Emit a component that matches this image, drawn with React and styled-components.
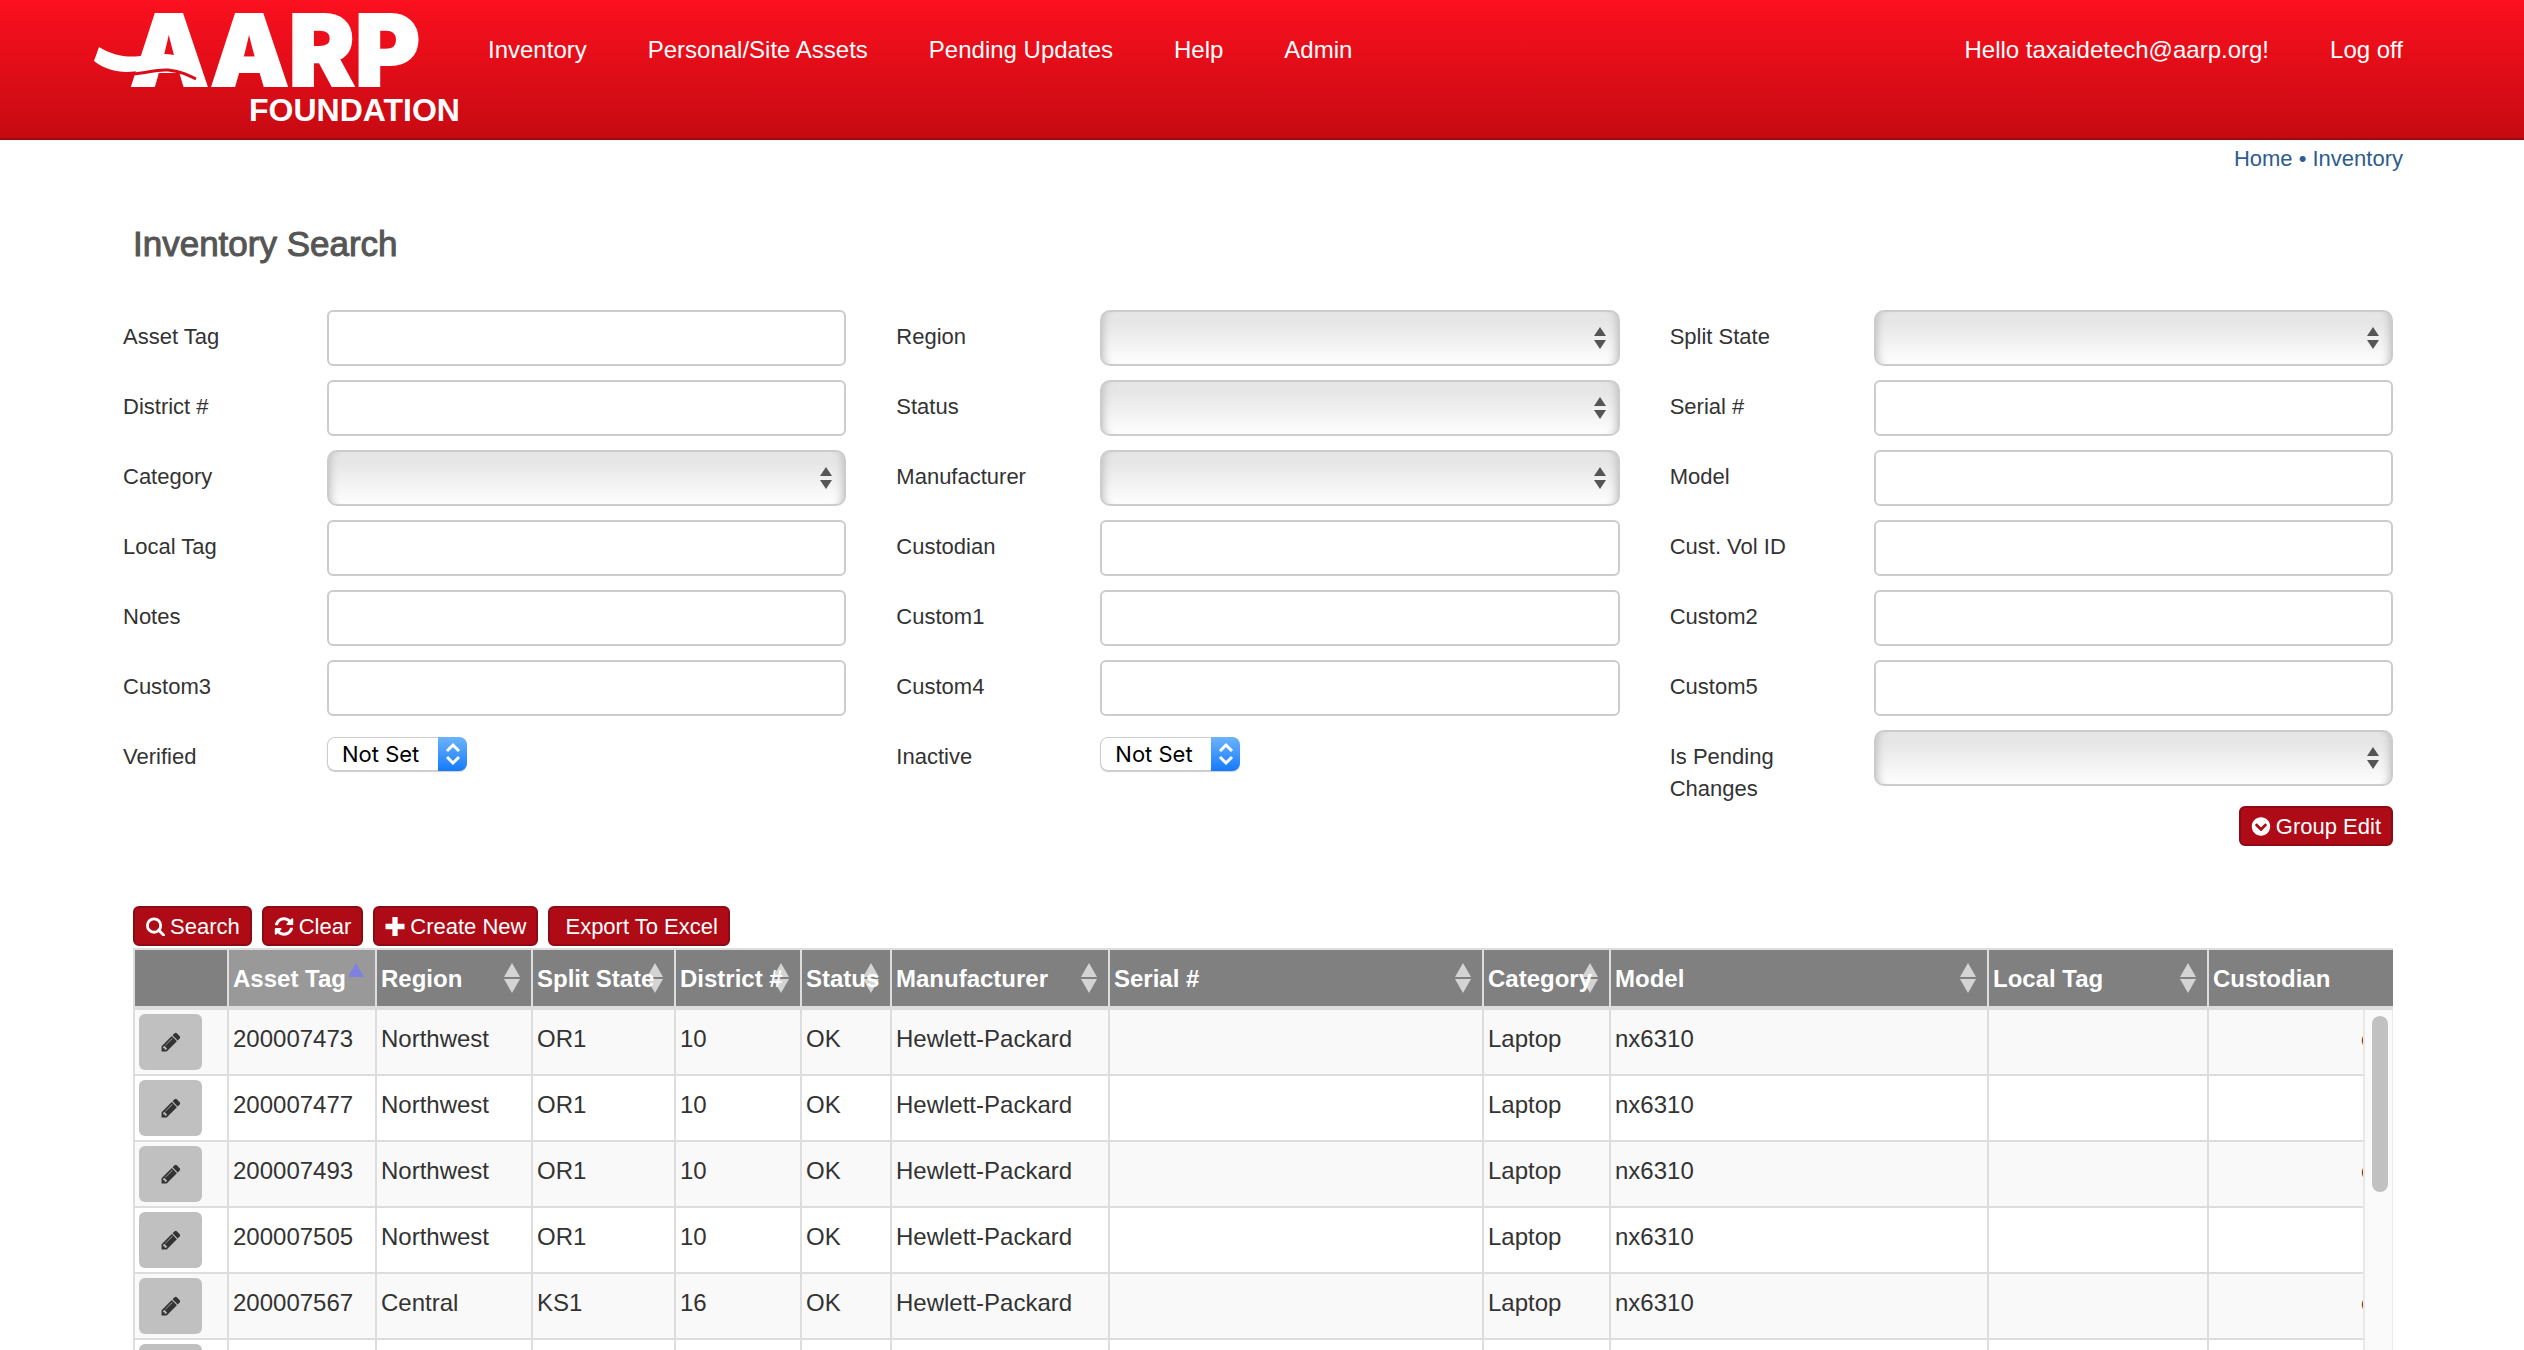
import React from 'react';
import styled, { createGlobalStyle } from 'styled-components';
import { FaSyncAlt, FaChevronCircleDown } from 'react-icons/fa';

const fields = [
    { label: 'Asset Tag', type: 'text' },
    { label: 'Region', type: 'select' },
    { label: 'Split State', type: 'select' },
    { label: 'District #', type: 'text' },
    { label: 'Status', type: 'select' },
    { label: 'Serial #', type: 'text' },
    { label: 'Category', type: 'select' },
    { label: 'Manufacturer', type: 'select' },
    { label: 'Model', type: 'text' },
    { label: 'Local Tag', type: 'text' },
    { label: 'Custodian', type: 'text' },
    { label: 'Cust. Vol ID', type: 'text' },
    { label: 'Notes', type: 'text' },
    { label: 'Custom1', type: 'text' },
    { label: 'Custom2', type: 'text' },
    { label: 'Custom3', type: 'text' },
    { label: 'Custom4', type: 'text' },
    { label: 'Custom5', type: 'text' },
    { label: 'Verified', type: 'tristate' },
    { label: 'Inactive', type: 'tristate' },
    { label: 'Is Pending Changes', type: 'select' }
];

const columns = [
    { key: 'edit', title: '', width: 94 },
    { key: 'tag', title: 'Asset Tag', width: 148, sort: 'asc' },
    { key: 'region', title: 'Region', width: 156, sort: 'both' },
    { key: 'split', title: 'Split State', width: 143, sort: 'both' },
    { key: 'district', title: 'District #', width: 126, sort: 'both' },
    { key: 'status', title: 'Status', width: 90, sort: 'both' },
    { key: 'maker', title: 'Manufacturer', width: 218, sort: 'both' },
    { key: 'serial', title: 'Serial #', width: 374, sort: 'both' },
    { key: 'category', title: 'Category', width: 127, sort: 'both' },
    { key: 'model', title: 'Model', width: 378, sort: 'both' },
    { key: 'local', title: 'Local Tag', width: 220, sort: 'both' },
    { key: 'custodian', title: 'Custodian', width: 186 }
];

const laptop = { status: 'OK', maker: 'Hewlett-Packard', category: 'Laptop', model: 'nx6310' };

const rows = [
    { ...laptop, tag: '200007473', region: 'Northwest', split: 'OR1', district: '10', custodian: 'c' },
    { ...laptop, tag: '200007477', region: 'Northwest', split: 'OR1', district: '10' },
    { ...laptop, tag: '200007493', region: 'Northwest', split: 'OR1', district: '10', custodian: 'c' },
    { ...laptop, tag: '200007505', region: 'Northwest', split: 'OR1', district: '10' },
    { ...laptop, tag: '200007567', region: 'Central', split: 'KS1', district: '16', custodian: 'c' },
    {}
];

const Logo = () => (
    <LogoSvg viewBox="0 0 372 124" role="img" aria-label="AARP Foundation">
        <LogoName x="36" y="86">AARP</LogoName>
        <path d="M5 47 C18 55 32 58 46 56 C62 53 82 53 98 60 L102 75 C88 66 64 64 48 70 C32 74 14 72 0 61 Z" fill="#fff" />
        <path d="M34 74 C52 74 60 69 74 70 C86 71 94 75 102 79" fill="none" stroke="#d90c18" strokeWidth="3" />
        <LogoSub x="155" y="121">FOUNDATION</LogoSub>
    </LogoSvg>
);

const SearchIcon = () => (
    <svg viewBox="0 0 20 20" aria-hidden="true" fill="none" stroke="currentColor" strokeLinecap="round">
        <circle cx="9" cy="9" r="7" strokeWidth="3" />
        <path d="M14 14 L19 19" strokeWidth="3" />
    </svg>
);

const PlusIcon = () => (
    <svg viewBox="0 0 18 18" aria-hidden="true" fill="none" stroke="currentColor" strokeWidth="5">
        <path d="M9 0 V18 M0 9 H18" />
    </svg>
);

const PencilIcon = () => (
    <svg viewBox="0 0 1792 1792" aria-hidden="true" fill="currentColor">
        <path d="M491 1536l91-91-235-235-91 91v107h128v128h107zm523-928q0-22-22-22-10 0-17 7l-542 542q-7 7-7 17 0 22 22 22 10 0 17-7l542-542q7-7 7-17zm-54-192l416 416-832 832h-416v-416zm683 96q0 53-37 90l-166 166-416-416 166-165q36-38 90-38 53 0 91 38l235 234q37 39 37 91z" />
    </svg>
);

const SortMark = ({ dir }) => (
    <SortSvg viewBox="0 0 16 30" aria-hidden="true">
        <path d="M8 0 L16 14 H0 Z" fill={dir === 'asc' ? '#8080e0' : '#d4d4d4'} />
        {dir === 'both' && <path d="M0 16 H16 L8 30 Z" fill="#d4d4d4" />}
    </SortSvg>
);

const Field = ({ label, type }) => {
    const id = label.toLowerCase().replace(/[^a-z0-9]+/g, '-');

    return (
        <FieldRow>
            <Label htmlFor={id}>{label}</Label>
            {type === 'text' && <TextInput id={id} type="text" />}
            {type === 'select' && (
                <SelectBox>
                    <Select id={id}>
                        <option value=""></option>
                    </Select>
                    <SelectArrows viewBox="0 0 12 22" aria-hidden="true">
                        <path d="M6 0 L12 9 H0 Z M0 13 H12 L6 22 Z" fill="#555" />
                    </SelectArrows>
                </SelectBox>
            )}
            {type === 'tristate' && (
                <NativeBox>
                    <NativeSelect id={id}>
                        <option>Not Set</option>
                    </NativeSelect>
                    <NativeArrows viewBox="0 0 29 34" aria-hidden="true">
                        <path d="M9 14 L15 8 L21 14 M9 20 L15 26 L21 20" />
                    </NativeArrows>
                </NativeBox>
            )}
        </FieldRow>
    );
};

export default class App extends React.Component {
    _renderCell(row, column) {
        if (column.key === 'edit') {
            return (
                <EditCell key={column.key}>
                    <EditButton type="button" aria-label="Edit">
                        <PencilIcon />
                    </EditButton>
                </EditCell>
            );
        }

        const CellTag = column.key === 'custodian' ? CustodianCell : Cell;
        return <CellTag key={column.key}>{row[column.key]}</CellTag>;
    }

    render() {
        return (
            <Page>
                <GlobalStyle />
                <Header>
                    <Logo />
                    <Nav>
                        <NavLink href="#">Inventory</NavLink>
                        <NavLink href="#">Personal/Site Assets</NavLink>
                        <NavLink href="#">Pending Updates</NavLink>
                        <NavLink href="#">Help</NavLink>
                        <NavLink href="#">Admin</NavLink>
                    </Nav>
                    <Nav>
                        <NavLink href="#">Hello taxaidetech@aarp.org!</NavLink>
                        <NavLink href="#">Log off</NavLink>
                    </Nav>
                </Header>
                <Breadcrumb>
                    <a href="#">Home</a> • <a href="#">Inventory</a>
                </Breadcrumb>
                <Title>Inventory Search</Title>
                <SearchForm onSubmit={(event) => event.preventDefault()}>
                    <FieldGrid>
                        {fields.map((field) => <Field key={field.label} {...field} />)}
                    </FieldGrid>
                    <FormFooter>
                        <Button type="button"><FaChevronCircleDown />Group Edit</Button>
                    </FormFooter>
                </SearchForm>
                <Results>
                    <Toolbar>
                        <Button type="button"><SearchIcon />Search</Button>
                        <Button type="button"><FaSyncAlt />Clear</Button>
                        <Button type="button"><PlusIcon />Create New</Button>
                        <Button type="button" $plain>Export To Excel</Button>
                    </Toolbar>
                    <TableWrap>
                        <Table>
                            <colgroup>
                                {columns.map((column) => <Col key={column.key} $width={column.width} />)}
                            </colgroup>
                            <thead>
                                <tr>
                                    {columns.map((column) => (
                                        <HeadCell key={column.key} scope="col" $sorted={column.sort === 'asc'}>
                                            {column.sort && <SortMark dir={column.sort} />}
                                            <HeadText>{column.title}</HeadText>
                                        </HeadCell>
                                    ))}
                                </tr>
                            </thead>
                            <tbody>
                                {rows.map((row, index) => (
                                    <Row key={index}>
                                        {columns.map((column) => this._renderCell(row, column))}
                                    </Row>
                                ))}
                            </tbody>
                        </Table>
                        <ScrollTrack>
                            <ScrollThumb />
                        </ScrollTrack>
                    </TableWrap>
                </Results>
            </Page>
        );
    }
}

const GlobalStyle = createGlobalStyle`
    * {
        box-sizing: border-box;
    }

    body {
        margin: 0;
        background: #fff;
        color: #333;
        font: 22px/32px "Liberation Sans", Arial, sans-serif;
    }
`;

const Page = styled.div`
    display: flex;
    flex-direction: column;
    height: 100vh;
    overflow: hidden;
`;

const Header = styled.header`
    display: flex;
    flex: none;
    align-items: flex-start;
    height: 140px;
    padding: 0 121px 0 94px;
    border-bottom: 2px solid #a00610;
    background: linear-gradient(#fb101e, #c60a12);
`;

const LogoSvg = styled.svg`
    flex: none;
    width: 372px;
    height: 124px;
    margin-right: 22px;
    overflow: visible;
`;

const LogoName = styled.text`
    font-family: Inter, "Liberation Sans", sans-serif;
    font-size: 99px;
    font-weight: 900;
    fill: #fff;
    stroke: #fff;
    stroke-width: 2px;
`;

const LogoSub = styled.text`
    font-size: 32px;
    font-weight: bold;
    fill: #fff;
`;

const Nav = styled.nav`
    display: flex;
    gap: 61px;
    padding-top: 34px;

    &:last-child {
        margin-left: auto;
    }
`;

const NavLink = styled.a`
    color: #fff;
    font-size: 24px;
    text-decoration: none;
    white-space: nowrap;
`;

const Breadcrumb = styled.nav`
    flex: none;
    padding: 3px 121px 0 0;
    color: #2d5c8e;
    text-align: right;

    a {
        color: inherit;
        text-decoration: none;
    }
`;

const Title = styled.h1`
    flex: none;
    margin: 50px 133px 47px;
    color: #555;
    font-size: 35px;
    font-weight: normal;
    line-height: 38px;
    -webkit-text-stroke: 1px #555;
`;

const SearchForm = styled.form`
    flex: none;
    padding: 0 131px 0 123px;
`;

const FieldGrid = styled.div`
    display: grid;
    grid-template-columns: repeat(3, 1fr);
    gap: 14px 50px;
`;

const FieldRow = styled.div`
    display: grid;
    grid-template-columns: 204px 1fr;
    align-items: start;
`;

const Label = styled.label`
    width: 140px;
    padding-top: 11px;
`;

const TextInput = styled.input`
    width: 100%;
    height: 56px;
    padding: 0 16px;
    border: 2px solid #ccc;
    border-radius: 6px;
    background: #fff;
    font: inherit;
`;

const SelectBox = styled.div`
    position: relative;
`;

const Select = styled.select`
    display: block;
    width: 100%;
    height: 56px;
    padding: 0 16px;
    border: 2px solid #ccc;
    border-radius: 10px;
    appearance: none;
    background: linear-gradient(#e6e6e6 20%, #fefefe);
    box-shadow: inset 9px 0 9px -8px #bbb, inset -9px 0 9px -8px #bbb;
    font: inherit;
`;

const SelectArrows = styled.svg`
    position: absolute;
    top: 17px;
    right: 14px;
    width: 12px;
    height: 22px;
    pointer-events: none;
`;

const NativeBox = styled.div`
    position: relative;
    width: 140px;
    margin-top: 7px;
`;

const NativeSelect = styled.select`
    display: block;
    width: 100%;
    height: 34px;
    padding: 0 0 0 14px;
    border: 1px solid #ccc;
    border-radius: 8px;
    appearance: none;
    background: #fff;
    box-shadow: 0 1px 1px rgba(0, 0, 0, .2);
    color: #000;
    font-family: Inter, "Liberation Sans", sans-serif;
    font-size: 22px;
`;

const NativeArrows = styled.svg`
    position: absolute;
    top: 0;
    right: 0;
    width: 29px;
    height: 34px;
    border-radius: 0 8px 8px 0;
    background: linear-gradient(#6cb3fa, #147bfd);
    fill: none;
    stroke: #fff;
    stroke-width: 3px;
    pointer-events: none;
`;

const FormFooter = styled.div`
    display: flex;
    justify-content: flex-end;
    padding-top: 1px;
`;

const Results = styled.section`
    display: flex;
    flex: 1;
    flex-direction: column;
    min-height: 0;
    padding: 60px 131px 0 133px;
`;

const Toolbar = styled.div`
    display: flex;
    flex: none;
    gap: 10px;
    margin-bottom: 2px;
`;

const Button = styled.button`
    display: flex;
    align-items: center;
    gap: 5px;
    height: 40px;
    padding: 1px 10px 0 ${(props) => (props.$plain ? '15px' : '10px')};
    border: 2px solid #8c0a14;
    border-radius: 6px;
    background: #ae0b16;
    color: #fff;
    font: inherit;
    white-space: nowrap;

    svg {
        width: 20px;
        height: 19px;
    }
`;

const TableWrap = styled.div`
    position: relative;
    flex: 1;
    min-height: 0;
    overflow: hidden;
    border-top: 2px solid #ddd;
`;

const Table = styled.table`
    width: 100%;
    border-spacing: 0;
    table-layout: fixed;
    font-size: 24px;
    line-height: 34px;
`;

const Col = styled.col`
    width: ${(props) => props.$width}px;
`;

const HeadCell = styled.th`
    position: relative;
    height: 60px;
    padding: 2px 0 0 4px;
    border-bottom: 4px solid #ddd;
    border-left: 2px solid #ddd;
    background: ${(props) => (props.$sorted ? '#999' : '#808080')};
    color: #fff;
    text-align: left;
    white-space: nowrap;
`;

const HeadText = styled.span`
    position: relative;
`;

const SortSvg = styled.svg`
    position: absolute;
    top: 13px;
    right: 11px;
    width: 16px;
    height: 30px;
`;

const Row = styled.tr`
    background: #fff;

    &:nth-child(odd) {
        background: #f9f9f9;
    }
`;

const Cell = styled.td`
    height: 66px;
    padding: 12px 0 0 4px;
    border-bottom: 2px solid #ddd;
    border-left: 2px solid #ddd;
    vertical-align: top;
    white-space: nowrap;
`;

const EditCell = styled(Cell)`
    padding-top: 4px;
`;

const CustodianCell = styled(Cell)`
    padding-right: 20px;
    text-align: right;
`;

const EditButton = styled.button`
    display: flex;
    align-items: center;
    justify-content: center;
    width: 63px;
    height: 56px;
    padding: 0;
    border: 0;
    border-radius: 6px;
    background: #c0c0c0;
    color: #333;

    svg {
        width: 22px;
        height: 22px;
    }
`;

/* sits over the last column, below the header */
const ScrollTrack = styled.div`
    position: absolute;
    top: 60px;
    right: 0;
    bottom: 0;
    width: 30px;
    padding: 6px 4px 0 7px;
    border-right: 1px solid #ebebeb;
    border-left: 2px solid #e8e8e8;
    background: #fafafa;
`;

const ScrollThumb = styled.div`
    width: 16px;
    height: 176px;
    border-radius: 8px;
    background: #c1c1c1;
`;
